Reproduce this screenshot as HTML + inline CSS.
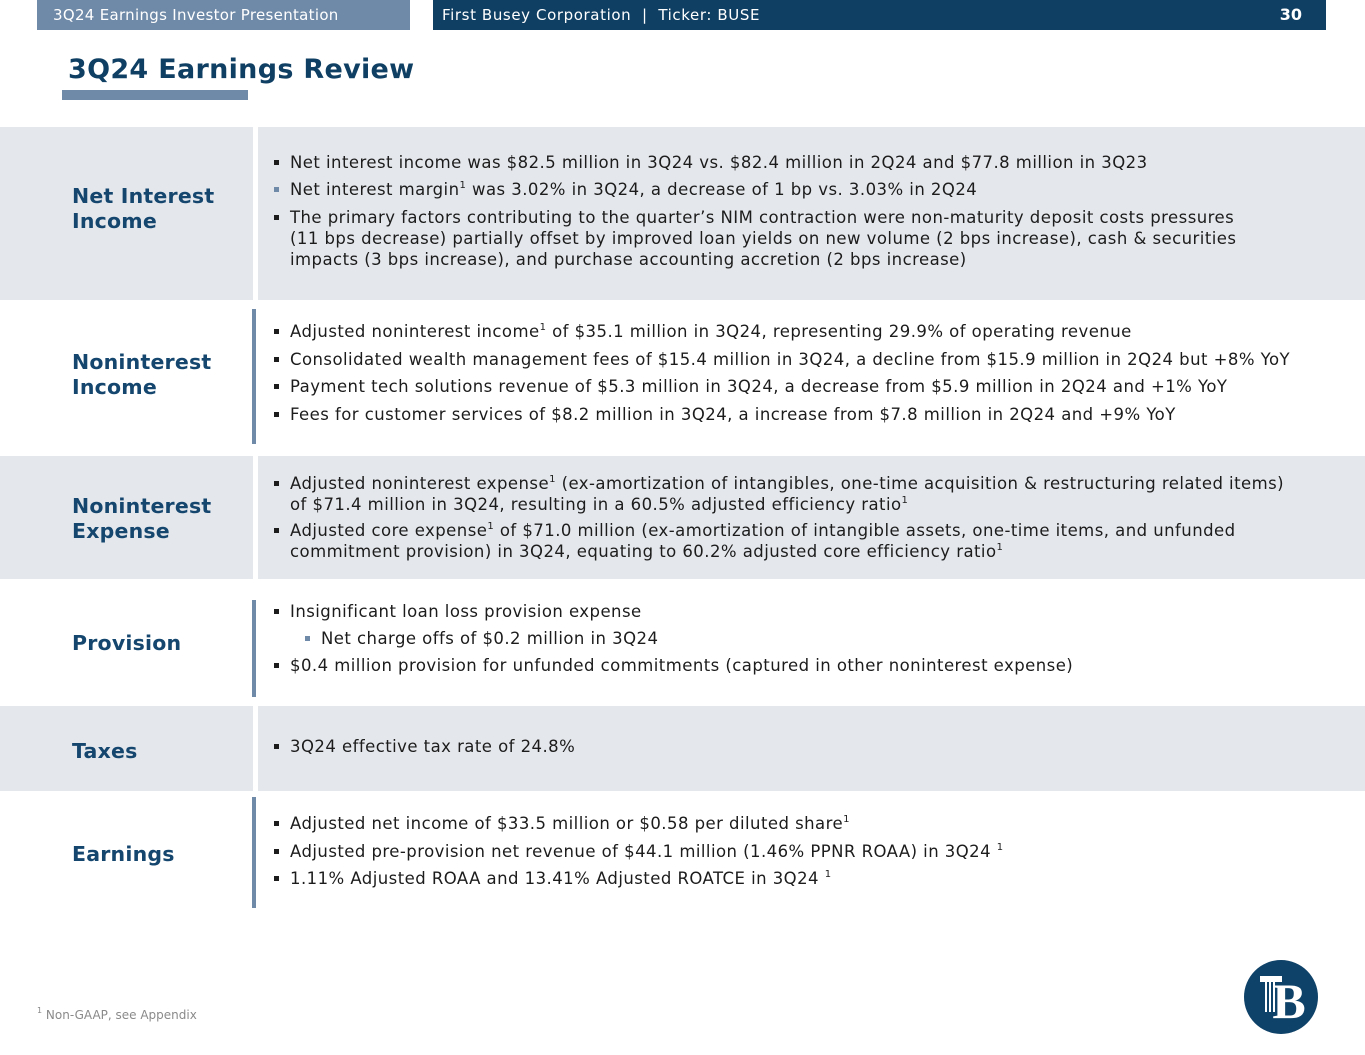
<!DOCTYPE html>
<html><head><meta charset="utf-8"><style>
*{margin:0;padding:0;box-sizing:border-box}
body{width:1365px;height:1055px;background:#fff;position:relative;overflow:hidden;font-family:"DejaVu Sans","Liberation Sans",sans-serif;color:#1c1c1c}
.abs{position:absolute}
.hl{left:37px;top:0;width:373px;height:30px;background:#6f8aa8;color:#fff;font-size:15px;line-height:30px;padding-left:16px;letter-spacing:0.3px}
.hr{left:433px;top:0;width:893px;height:30px;background:#0f3f63;color:#fff;font-size:15px;line-height:30px;padding-left:9px;letter-spacing:0.6px}
.hr b{position:absolute;right:24px;top:0;font-size:16px;letter-spacing:0}
.title{left:68px;top:54px;font-size:27px;font-weight:bold;color:#0f3f63;letter-spacing:0.3px}
.ul{left:62px;top:90px;width:186px;height:10px;background:#6f8aa8}
.band{left:0;width:1365px;background:#e4e7ec}
.gap{left:253px;width:5px;background:#fff}
.vbar{left:252px;width:4px;background:#6f8aa8}
.lab{left:72px;font-size:20.5px;font-weight:bold;color:#14466e;line-height:25px;letter-spacing:0.2px}
.b{left:271px;font-size:16.5px;line-height:21px;padding-left:19px;white-space:nowrap;letter-spacing:0.45px}
.b:before{content:"";position:absolute;left:3px;top:8px;width:5px;height:5px;background:#1c1c1c}
.b.g:before{background:#6f8aa8}
.b.i{left:302px}
.b.i:before{background:#6f8aa8}
sup{font-size:10px;line-height:0;position:relative;top:-1px}
</style></head><body>
<div class="abs hl">3Q24 Earnings Investor Presentation</div>
<div class="abs hr">First Busey Corporation &nbsp;| &nbsp;Ticker: BUSE<b>30</b></div>
<div class="abs title">3Q24 Earnings Review</div>
<div class="abs ul"></div>

<div class="abs band" style="top:127px;height:173px"></div>
<div class="abs gap" style="top:127px;height:173px"></div>
<div class="abs band" style="top:456px;height:123px"></div>
<div class="abs gap" style="top:456px;height:123px"></div>
<div class="abs band" style="top:706px;height:85px"></div>
<div class="abs gap" style="top:706px;height:85px"></div>
<div class="abs vbar" style="top:309px;height:135px"></div>
<div class="abs vbar" style="top:600px;height:97px"></div>
<div class="abs vbar" style="top:797px;height:111px"></div>

<div class="abs lab" style="top:184px">Net Interest<br>Income</div>
<div class="abs lab" style="top:350px">Noninterest<br>Income</div>
<div class="abs lab" style="top:494px">Noninterest<br>Expense</div>
<div class="abs lab" style="top:631px">Provision</div>
<div class="abs lab" style="top:739px">Taxes</div>
<div class="abs lab" style="top:842px">Earnings</div>

<div class="abs b" style="top:152px">Net interest income was $82.5 million in 3Q24 vs. $82.4 million in 2Q24 and $77.8 million in 3Q23</div>
<div class="abs b g" style="top:179px">Net interest margin<sup>1</sup> was 3.02% in 3Q24, a decrease of 1 bp vs. 3.03% in 2Q24</div>
<div class="abs b" style="top:207px">The primary factors contributing to the quarter’s NIM contraction were non-maturity deposit costs pressures<br>(11 bps decrease) partially offset by improved loan yields on new volume (2 bps increase), cash &amp; securities<br>impacts (3 bps increase), and purchase accounting accretion (2 bps increase)</div>

<div class="abs b" style="top:321px">Adjusted noninterest income<sup>1</sup> of $35.1 million in 3Q24, representing 29.9% of operating revenue</div>
<div class="abs b" style="top:349px">Consolidated wealth management fees of $15.4 million in 3Q24, a decline from $15.9 million in 2Q24 but +8% YoY</div>
<div class="abs b" style="top:376px">Payment tech solutions revenue of $5.3 million in 3Q24, a decrease from $5.9 million in 2Q24 and +1% YoY</div>
<div class="abs b" style="top:404px">Fees for customer services of $8.2 million in 3Q24, a increase from $7.8 million in 2Q24 and +9% YoY</div>

<div class="abs b" style="top:473px">Adjusted noninterest expense<sup>1</sup> (ex-amortization of intangibles, one-time acquisition &amp; restructuring related items)<br>of $71.4 million in 3Q24, resulting in a 60.5% adjusted efficiency ratio<sup>1</sup></div>
<div class="abs b" style="top:520px">Adjusted core expense<sup>1</sup> of $71.0 million (ex-amortization of intangible assets, one-time items, and unfunded<br>commitment provision) in 3Q24, equating to 60.2% adjusted core efficiency ratio<sup>1</sup></div>

<div class="abs b" style="top:601px">Insignificant loan loss provision expense</div>
<div class="abs b i" style="top:628px">Net charge offs of $0.2 million in 3Q24</div>
<div class="abs b" style="top:655px">$0.4 million provision for unfunded commitments (captured in other noninterest expense)</div>

<div class="abs b" style="top:736px">3Q24 effective tax rate of 24.8%</div>

<div class="abs b" style="top:813px">Adjusted net income of $33.5 million or $0.58 per diluted share<sup>1</sup></div>
<div class="abs b" style="top:841px">Adjusted pre-provision net revenue of $44.1 million (1.46% PPNR ROAA) in 3Q24 <sup>1</sup></div>
<div class="abs b" style="top:868px">1.11% Adjusted ROAA and 13.41% Adjusted ROATCE in 3Q24 <sup>1</sup></div>

<div class="abs" style="left:37px;top:1008px;font-size:12px;color:#8a8a8a"><sup style="font-size:8px">1</sup> Non-GAAP, see Appendix</div>

<svg class="abs" style="left:1243px;top:959px" width="76" height="76" viewBox="0 0 76 76">
<circle cx="38" cy="38" r="37" fill="#0f4268"/>
<text x="46" y="59" font-family="Liberation Serif,serif" font-weight="bold" font-size="50" fill="#fff" text-anchor="middle">B</text>
<rect x="17" y="17" width="22" height="6" fill="#fff"/>
<rect x="22" y="23" width="2" height="30" fill="#fff"/>
<rect x="26" y="23" width="2" height="30" fill="#fff"/>
<rect x="30" y="23" width="2" height="30" fill="#fff"/>
</svg>
</body></html>
